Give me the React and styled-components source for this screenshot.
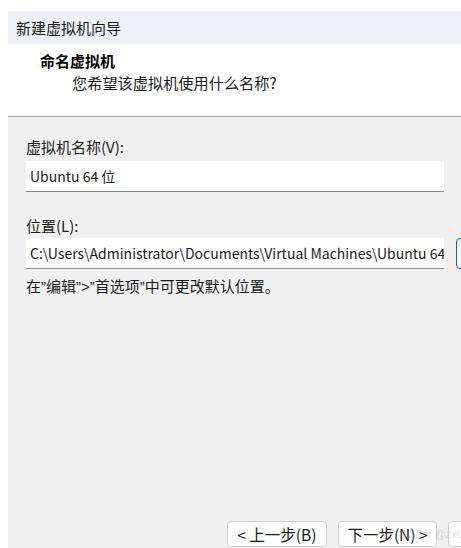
import React from "react";
import styled, { createGlobalStyle } from "styled-components";

const Global = createGlobalStyle`
  html, body { margin: 0; padding: 0; background: #ffffff; overflow: hidden; }
  * { box-sizing: border-box; }
`;

const FONT = `"Noto Sans CJK SC", "Noto Sans", sans-serif`;
const QUOTE_FONT = `"Liberation Sans", "Noto Sans CJK SC", sans-serif`;

const Page = styled.div`
  width: 461px;
  height: 548px;
  overflow: hidden;
  padding: 11px 0 0 8px;
  background: #ffffff;
  font-family: ${FONT};
  color: #1a1a1a;
`;

const Window = styled.div`
  width: 540px;
  height: 537px;
  display: flex;
  flex-direction: column;
  position: relative;
`;

const TitleBar = styled.div`
  height: 33px;
  background: #eef2f6;
  padding-left: 8px;
  font-size: 15px;
  line-height: 33px;
  color: #1a1a1a;
`;

const Header = styled.div`
  height: 73px;
  background: #ffffff;
  padding: 7px 0 0 32px;
  border-bottom: 1px solid #a0a0a0;
  display: flex;
  flex-direction: column;
`;

const Heading = styled.div`
  font-size: 15px;
  font-weight: 700;
  line-height: 20px;
  color: #000;
`;

const SubHeading = styled.div`
  font-size: 15.2px;
  line-height: 22px;
  padding-left: 32px;
  color: #1a1a1a;
`;

const Body = styled.div`
  flex: 1;
  background: #f0f0f0;
  padding: 20px 0 0 18px;
  display: flex;
  flex-direction: column;
`;

const Label = styled.div`
  font-size: 15px;
  line-height: 20px;
  margin-top: ${(p) => p.$mt || 0}px;
`;

const FieldRow = styled.div`
  display: flex;
  align-items: stretch;
  gap: 12px;
  margin-top: ${(p) => p.$mt || 0}px;
`;

const TextBox = styled.div`
  width: 418px;
  height: 31px;
  background: #ffffff;
  border-bottom: 1px solid #8a8a8a;
  padding: 0 4px;
  font-size: 14px;
  line-height: 30px;
  white-space: nowrap;
  overflow: hidden;
  color: #1a1a1a;
`;

const BrowseButton = styled.div`
  width: 90px;
  height: 31px;
  border: 1px solid #0067c0;
  border-radius: 4px;
  background: #fdfdfd;
`;

const Hint = styled.div`
  font-family: ${QUOTE_FONT};
  font-size: 15px;
  line-height: 20px;
  margin-top: 8px;
`;

const Spacer = styled.div`
  flex: 1;
`;

const ButtonRow = styled.div`
  display: flex;
  gap: 11px;
  padding-left: 201px;
  margin-bottom: 1px;
`;

const Button = styled.div`
  width: 105px;
  height: 26px;
  border: 1px solid #d0d0d0;
  border-radius: 4px;
  background: #fdfdfd;
  font-size: 15.5px;
  line-height: 24px;
  text-align: center;
  color: #1a1a1a;
  white-space: nowrap;
`;

const Watermark = styled.div`
  position: absolute;
  left: 392px;
  top: 517px;
  font-size: 11px;
  font-family: "Liberation Sans", sans-serif;
  font-style: italic;
  color: rgba(150, 150, 150, 0.3);
  white-space: nowrap;
  pointer-events: none;
`;

export default function App() {
  return (
    <>
      <Global />
      <Page>
        <Window>
          <TitleBar>新建虚拟机向导</TitleBar>
          <Header>
            <Heading>命名虚拟机</Heading>
            <SubHeading>您希望该虚拟机使用什么名称?</SubHeading>
          </Header>
          <Body>
            <Label>虚拟机名称(V):</Label>
            <FieldRow $mt={4}>
              <TextBox>Ubuntu 64 位</TextBox>
            </FieldRow>
            <Label $mt={24}>位置(L):</Label>
            <FieldRow $mt={2}>
              <TextBox>C:\Users\Administrator\Documents\Virtual Machines\Ubuntu 64 位</TextBox>
              <BrowseButton />
            </FieldRow>
            <Hint>在”编辑”&gt;”首选项”中可更改默认位置。</Hint>
            <Spacer />
            <ButtonRow>
              <Button>&lt; 上一步(B)</Button>
              <Button>下一步(N) &gt;</Button>
              <Button />
            </ButtonRow>
          </Body>
          <Watermark>CSDN @zxGzx</Watermark>
        </Window>
      </Page>
    </>
  );
}
